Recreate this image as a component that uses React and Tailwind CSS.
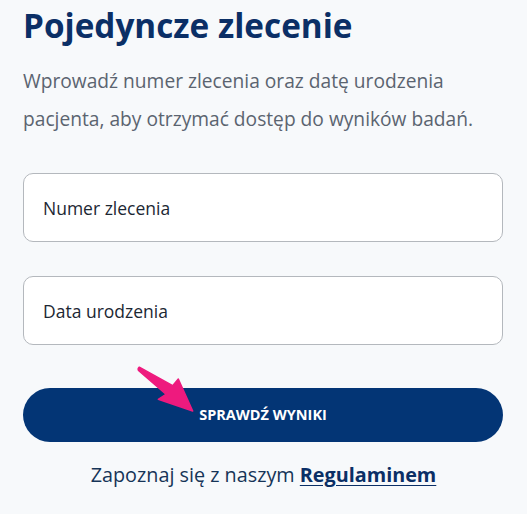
export default function App() {
  return (
    <div className="min-h-[514px] w-full bg-[#f7f9fb] px-[23px] pt-[5px] font-['Open_Sans',sans-serif]">
      <h1 className="text-[33.3px] font-bold leading-[40px] text-[#0b2f66]">Pojedyncze zlecenie</h1>
      <p className="mt-[17px] text-[19.2px] leading-[38px] text-[#5b6470]">
        Wprowadź numer zlecenia oraz datę urodzenia
        <br />
        pacjenta, aby otrzymać dostęp do wyników badań.
      </p>
      <div className="mt-[35px] flex flex-col gap-[34px] pr-[1px]">
        <div className="flex h-[69px] items-center rounded-[10px] border border-[#b4b8bd] bg-white px-[19px] pt-[2px] text-[17.5px] text-[#1c2733]">
          Numer zlecenia
        </div>
        <div className="flex h-[69px] items-center rounded-[10px] border border-[#b4b8bd] bg-white px-[19px] pt-[2px] text-[17.5px] text-[#1c2733]">
          Data urodzenia
        </div>
      </div>
      <div className="relative mt-[43px]">
        <button className="flex h-[54px] w-[480px] items-center justify-center rounded-full bg-[#033575] text-[14.5px] font-bold text-white">
          SPRAWDŹ WYNIKI
        </button>
        <svg className="absolute left-[107px] top-[-33px]" width="80" height="60" viewBox="0 0 80 60">
          <path
            d="M9.3 12.2 L42.7 30.7 L48.3 24 L62.7 56 L28.3 44.3 L36 39.3 L8.5 15.5 Q7.5 13.5 9.3 12.2 Z"
            fill="#ee1a7e"
            stroke="#ee1a7e"
            strokeWidth="1.5"
            strokeLinejoin="round"
          />
        </svg>
      </div>
      <p className="mt-[19px] text-center text-[19.8px] leading-[28px] text-[#163457]">
        Zapoznaj się z naszym{" "}
        <a className="font-bold text-[#0b2f66] underline underline-offset-[3px]" href="#">Regulaminem</a>
      </p>
    </div>
  );
}
